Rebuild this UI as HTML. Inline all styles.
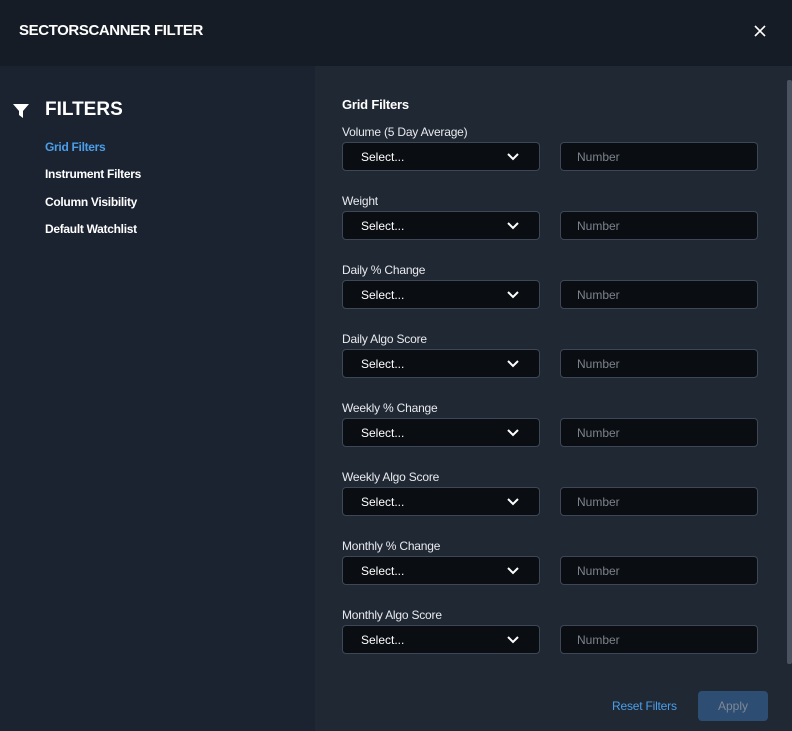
<!DOCTYPE html>
<html><head><style>
*{box-sizing:border-box;margin:0;padding:0}
body{width:792px;height:731px;overflow:hidden;font-family:"Liberation Sans",sans-serif;background:#202834;position:relative;color:#fff}
.hdr{position:absolute;left:0;top:0;width:792px;height:66px;background:#161c26}
.hdr h1{position:absolute;left:19px;top:22px;font-size:15px;font-weight:bold;letter-spacing:-0.4px}
.x{position:absolute;left:753px;top:24px}
.left{position:absolute;left:0;top:66px;width:315px;height:665px;background:#1b2230}
.ft{position:absolute;left:45px;top:33px;font-size:19px;font-weight:bold}
.fi{position:absolute;left:13px;top:37px}
.nav{position:absolute;left:45px;font-size:12px;font-weight:bold;letter-spacing:-0.3px}
.gt{position:absolute;left:342px;top:97px;font-size:13px;font-weight:bold;letter-spacing:-0.2px}
.lbl{position:absolute;left:342px;font-size:12px;color:#e8eaee;letter-spacing:-0.2px}
.sel,.num{position:absolute;height:29px;width:198px;background:#0a0d12;border:1px solid #3e4756;border-radius:4px;font-size:12px}
.sel{left:342px;padding:7px 0 0 18px;color:#fff}
.num{left:560px;padding:7px 0 0 16px;color:#7d838c}
.sel svg{position:absolute;left:164px;top:10px}
.sb{position:absolute;left:787px;top:80px;width:5px;height:584px;background:#4b5361;border-radius:2px}
.reset{position:absolute;left:612px;top:699px;font-size:12px;color:#4a9ee8;letter-spacing:-0.2px}
.apply{position:absolute;left:698px;top:691px;width:70px;height:30px;background:#2e4d73;border-radius:4px;color:#7d8896;font-size:12px;text-align:center;line-height:30px}
</style></head><body>
<div class="hdr"><h1>SECTORSCANNER FILTER</h1>
<svg class="x" width="14" height="14" viewBox="0 0 14 14"><path d="M2 2L12 12M12 2L2 12" stroke="#fff" stroke-width="1.6"/></svg></div>
<div class="left">
<svg class="fi" width="16" height="16" viewBox="0 0 16 16"><path d="M0 1H16L10 8V15L6 12V8Z" fill="#fff"/></svg>
<div class="ft">FILTERS</div>
<div class="nav" style="top:74px;color:#4a9ee8">Grid Filters</div>
<div class="nav" style="top:101px">Instrument Filters</div>
<div class="nav" style="top:129px">Column Visibility</div>
<div class="nav" style="top:156px">Default Watchlist</div>
</div>
<div class="gt">Grid Filters</div>
<div class="lbl" style="top:125px">Volume (5 Day Average)</div>
<div class="sel" style="top:142px">Select...<svg width="12" height="8" viewBox="0 0 12 8"><path d="M1 1L6 6L11 1" stroke="#fff" stroke-width="2" fill="none"/></svg></div><div class="num" style="top:142px">Number</div>
<div class="lbl" style="top:194px">Weight</div>
<div class="sel" style="top:211px">Select...<svg width="12" height="8" viewBox="0 0 12 8"><path d="M1 1L6 6L11 1" stroke="#fff" stroke-width="2" fill="none"/></svg></div><div class="num" style="top:211px">Number</div>
<div class="lbl" style="top:263px">Daily % Change</div>
<div class="sel" style="top:280px">Select...<svg width="12" height="8" viewBox="0 0 12 8"><path d="M1 1L6 6L11 1" stroke="#fff" stroke-width="2" fill="none"/></svg></div><div class="num" style="top:280px">Number</div>
<div class="lbl" style="top:332px">Daily Algo Score</div>
<div class="sel" style="top:349px">Select...<svg width="12" height="8" viewBox="0 0 12 8"><path d="M1 1L6 6L11 1" stroke="#fff" stroke-width="2" fill="none"/></svg></div><div class="num" style="top:349px">Number</div>
<div class="lbl" style="top:401px">Weekly % Change</div>
<div class="sel" style="top:418px">Select...<svg width="12" height="8" viewBox="0 0 12 8"><path d="M1 1L6 6L11 1" stroke="#fff" stroke-width="2" fill="none"/></svg></div><div class="num" style="top:418px">Number</div>
<div class="lbl" style="top:470px">Weekly Algo Score</div>
<div class="sel" style="top:487px">Select...<svg width="12" height="8" viewBox="0 0 12 8"><path d="M1 1L6 6L11 1" stroke="#fff" stroke-width="2" fill="none"/></svg></div><div class="num" style="top:487px">Number</div>
<div class="lbl" style="top:539px">Monthly % Change</div>
<div class="sel" style="top:556px">Select...<svg width="12" height="8" viewBox="0 0 12 8"><path d="M1 1L6 6L11 1" stroke="#fff" stroke-width="2" fill="none"/></svg></div><div class="num" style="top:556px">Number</div>
<div class="lbl" style="top:608px">Monthly Algo Score</div>
<div class="sel" style="top:625px">Select...<svg width="12" height="8" viewBox="0 0 12 8"><path d="M1 1L6 6L11 1" stroke="#fff" stroke-width="2" fill="none"/></svg></div><div class="num" style="top:625px">Number</div>
<div class="sb"></div>
<div class="reset">Reset Filters</div>
<div class="apply">Apply</div>
</body></html>
